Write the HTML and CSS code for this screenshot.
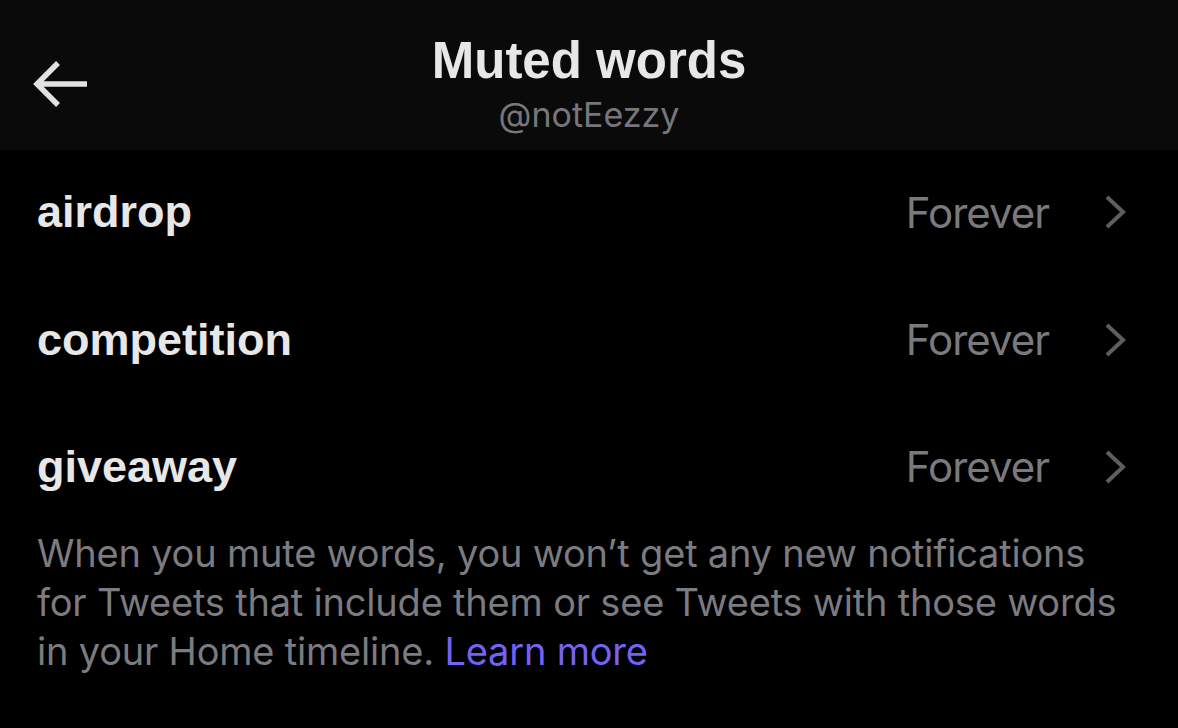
FILE: index.html
```html
<!DOCTYPE html>
<html>
<head>
<meta charset="utf-8">
<link rel="stylesheet" href="styles.css">
</head>
<body>
<div class="page">
  <header class="header">
    <div class="back">
      <svg width="56" height="48" viewBox="0 0 56 48"><path d="M54 24H6M25 3L4 24l21 21" fill="none" stroke="#e2e2e2" stroke-width="5.5"/></svg>
    </div>
    <div class="titles">
      <div class="title">Muted words</div>
      <div class="handle">@notEezzy</div>
    </div>
  </header>
  <div class="list">
    <div class="row">
      <span class="word">airdrop</span>
      <span class="dur">Forever</span>
      <svg class="chev" width="26" height="36" viewBox="0 0 26 36"><path d="M5 3l16 15L5 33" fill="none" stroke="#5e5e62" stroke-width="4"/></svg>
    </div>
    <div class="row">
      <span class="word">competition</span>
      <span class="dur">Forever</span>
      <svg class="chev" width="26" height="36" viewBox="0 0 26 36"><path d="M5 3l16 15L5 33" fill="none" stroke="#5e5e62" stroke-width="4"/></svg>
    </div>
    <div class="row">
      <span class="word">giveaway</span>
      <span class="dur">Forever</span>
      <svg class="chev" width="26" height="36" viewBox="0 0 26 36"><path d="M5 3l16 15L5 33" fill="none" stroke="#5e5e62" stroke-width="4"/></svg>
    </div>
  </div>
  <p class="note">When you mute words, you won’t get any new notifications<br>for Tweets that include them or see Tweets with those words<br>in your Home timeline. <a class="link">Learn more</a></p>
</div>
</body>
</html>
```
FILE: styles.css
```css
* { box-sizing: border-box; }
html, body { margin: 0; padding: 0; background: #000; }
body { font-family: "Liberation Sans", Arial, sans-serif; }
.page { width: 1178px; height: 728px; background: #000; overflow: hidden; }
.header {
  height: 150px;
  background: #0a0a0a;
  display: flex;
  align-items: center;
  justify-content: center;
  position: relative;
}
.back { position: absolute; left: 33px; top: 60px; display: flex; }
.titles { display: flex; flex-direction: column; align-items: center; }
.title { color: #e7e7e7; font-weight: 700; font-size: 51px; line-height: 56px; margin-top: 18px; }
.handle { color: #77777b; font-family: Inter, "Liberation Sans", sans-serif; font-size: 34px; line-height: 40px; margin-top: 6px; }
.list { display: flex; flex-direction: column; }
.row {
  height: 127px;
  display: flex;
  align-items: center;
  padding: 0 50px 0 37px;
}
.row:first-child { height: 126px; padding-bottom: 2px; }
.word { color: #e7e7e7; font-weight: 700; font-size: 45px; flex: 1; }
.dur { color: #7a7a7e; font-family: Inter, "Liberation Sans", sans-serif; font-size: 42px; letter-spacing: -1px; margin-right: 53px; }
.chev { display: block; }
.note {
  margin: 0;
  padding: 0 0 0 37px;
  color: #7b7b80;
  font-family: Inter, "Liberation Sans", sans-serif;
  font-size: 38px;
  line-height: 49px;
  margin-top: -1px;
  letter-spacing: -0.2px;
}
.link { color: #7463f2; }
```
